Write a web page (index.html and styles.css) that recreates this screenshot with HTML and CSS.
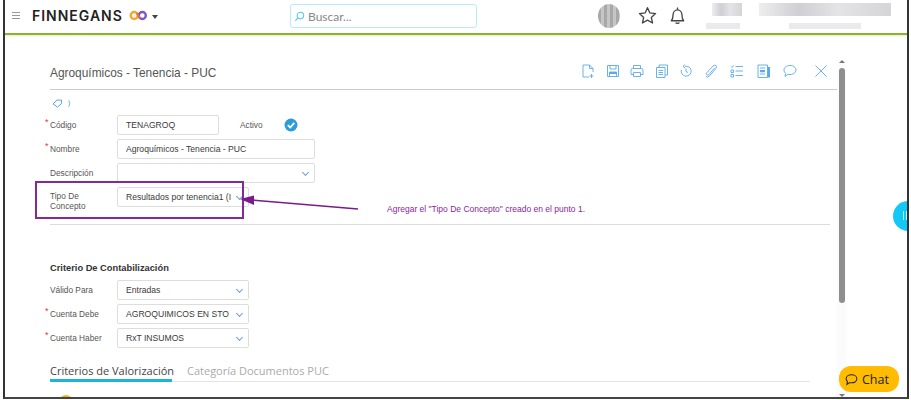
FILE: index.html
```html
<!DOCTYPE html>
<html lang="es">
<head>
<meta charset="utf-8">
<title>Agroquímicos - Tenencia - PUC</title>
<link rel="stylesheet" href="styles.css">
</head>
<body>
<div class="frame">
  <header class="topbar">
    <div class="hamb"><i></i><i></i><i></i></div>
    <div class="logo">FINNEGANS</div>
    <svg class="logo-mark" viewBox="0 0 20 11" width="19" height="11"><circle cx="5.500" cy="5.500" r="3.700" fill="none" stroke="#f7a823" stroke-width="2.500"/><circle cx="14" cy="5.500" r="3.700" fill="none" stroke="#7d55c7" stroke-width="2.500"/><path d="M8.200 2.800q1.600 2.700 3.200 5.400" stroke="#ef6a4c" stroke-width="2" fill="none"/></svg>
    <div class="caret"></div>
    <div class="search">
      <svg viewBox="0 0 12 12" width="11" height="11"><circle cx="7" cy="5" r="3.600" fill="none" stroke="#49c8ee" stroke-width="1.100"/><path d="M4.400 7.600 1.500 10.500" stroke="#49c8ee" stroke-width="1.100"/></svg>
      <span>Buscar...</span>
    </div>
    <div class="top-right">
      <div class="blob"></div>
      <svg class="star" viewBox="0 0 20 20" width="19" height="19"><path d="M10 1.800l2.500 5.500 6 .7-4.500 4 1.300 5.900-5.300-3-5.300 3 1.300-5.900-4.500-4 6-.7z" fill="none" stroke="#444" stroke-width="1.400" stroke-linejoin="round"/></svg>
      <svg class="bell" viewBox="0 0 20 20" width="19" height="19"><path d="M3.500 15.500c1.500-1.500 1.800-3 1.800-6 0-3 2-5.500 4.700-5.500s4.700 2.500 4.700 5.500c0 3 .3 4.500 1.800 6z" fill="none" stroke="#444" stroke-width="1.400" stroke-linejoin="round"/><path d="M10 1.500v2.500M8 17.500c.7 1 3.300 1 4 0" fill="none" stroke="#444" stroke-width="1.400"/></svg>
      <div class="blur-a"><b></b><u></u></div>
      <div class="blur-b"><b></b><u></u></div>
    </div>
  </header>

  <div class="page">
    <main class="content">
      <div class="title-row">
        <h1>Agroquímicos - Tenencia - PUC</h1>
        <div class="tools">
          <svg viewBox="0 0 14 14"><path d="M8.500 1H2v12h6M8.500 1 12 4.500V8M8.500 1v3.500H12M10.500 10v4M8.500 12h4"/></svg>
          <svg viewBox="0 0 14 14"><path d="M1.500 1.500h11v11h-11zM4 1.500v3.500h6V1.500M3.500 12.500V8h7v4.500"/><path class="fill" d="M3.500 8h7v2h-7z"/></svg>
          <svg viewBox="0 0 14 14"><path d="M3.500 4.500V1.500h7v3M3.500 10.500H1V6q0-1.500 1.500-1.500h9Q13 4.500 13 6v4.500h-2.500M3.500 8.500h7v4h-7z"/></svg>
          <svg viewBox="0 0 14 14"><path d="M1.500 3.500h8.500v10H1.500zM4 3.500V1h8.500v10H10M3.500 6.500h4.500M3.500 8.500h4.500M3.500 10.500h4.500"/></svg>
          <svg viewBox="0 0 14 14"><path d="M6 2.300A5 5 0 1 1 2.300 6M6 .5 4 2.300 6 4M7 4.500v3l2 1"/></svg>
          <svg viewBox="0 0 14 14"><path d="M10.500 4 5 10.500q-1.300 1.300-2.300.3t.3-2.300L9 2q1.700-1.500 3-.3t-.3 3L5.500 12q-2 2-3.600.5"/></svg>
          <svg class="wide" viewBox="0 0 14 14"><path d="M5.500 2.500H13M5.500 7H13M5.500 11.500H13M1 6h2.500v2.500H1zM1 10.500h2.500V13H1zM1 2.500l1 1 1.500-2"/></svg>
          <svg class="wide" viewBox="0 0 14 14"><path d="M1 1h9.500v12.500H1zM3 4h5M3 10h5"/><path class="fill" d="M3 6h5v2.200H3zM10.500 3H13v10.500h-2.500z"/></svg>
          <svg class="wide" viewBox="0 0 14 14"><path d="M7 1.500c3.300 0 6 1.900 6 4.500s-2.700 4.500-6 4.500q-1 0-2-.2L2 12.500l.6-3C1.600 8.600 1 7.400 1 6c0-2.600 2.700-4.500 6-4.500z"/></svg>
          <svg class="close" viewBox="0 0 14 14"><path d="M1.500 1.500l11 11M12.500 1.500l-11 11"/></svg>
        </div>
      </div>
      <div class="crumb">
        <svg viewBox="0 0 12 10" width="11" height="9"><path d="M1 5.500 5.500 1.200H10.500V5L6 9z" fill="none" stroke="#3f9cf0" stroke-width="1"/></svg>
        <svg viewBox="0 0 5 10" width="4" height="9"><path d="M1 1q2.500 4 0 8" fill="none" stroke="#3f9cf0" stroke-width=".9"/></svg>
      </div>

      <section class="form-top">
        <div class="row">
          <label class="req">Código</label>
          <div class="field w-code">TENAGROQ</div>
          <span class="active-label">Activo</span>
          <svg class="check" viewBox="0 0 14 14" width="14" height="14"><circle cx="7" cy="7" r="6.500" fill="#2d9cdb"/><path d="M3.800 7.200 6.200 9.500 10.300 4.800" fill="none" stroke="#fff" stroke-width="1.800"/></svg>
        </div>
        <div class="row">
          <label class="req">Nombre</label>
          <div class="field w-long">Agroquímicos - Tenencia - PUC</div>
        </div>
        <div class="row">
          <label>Descripción</label>
          <div class="field w-long select"></div>
        </div>
        <div class="row tipo">
          <label>Tipo De<br>Concepto</label>
          <div class="field w-mid select">Resultados por tenencia1 (I</div>
        </div>
      </section>

      <hr class="rule">

      <h2>Criterio De Contabilización</h2>
      <section>
        <div class="row">
          <label>Válido Para</label>
          <div class="field w-mid select">Entradas</div>
        </div>
        <div class="row">
          <label class="req">Cuenta Debe</label>
          <div class="field w-mid select"><span class="clip">AGROQUIMICOS EN STO</span></div>
        </div>
        <div class="row">
          <label class="req">Cuenta Haber</label>
          <div class="field w-mid select">RxT INSUMOS</div>
        </div>
      </section>

      <nav class="tabs">
        <span class="tab on">Criterios de Valorización</span>
        <span class="tab">Categoría Documentos PUC</span>
      </nav>
      <div class="warn-dot"></div>
    </main>

    <aside class="scroll">
      <div class="arrow up"></div>
      <div class="thumb"></div>
      <div class="arrow down"></div>
    </aside>
  </div>

  <div class="note-box"></div>
  <svg class="note-arrow" viewBox="0 0 120 22" width="120" height="22"><path d="M118 18 12 9" stroke="#7b1a8c" stroke-width="1.500"/><path d="M0 8 14 4.500 14 14z" fill="#7b1a8c"/></svg>
  <div class="note-text">Agregar el "Tipo De Concepto" creado en el punto 1.</div>

  <div class="handle"><i></i><i></i></div>
  <button class="chat">
    <svg viewBox="0 0 14 14" width="13" height="13"><path d="M7 2c3.200 0 5.800 1.800 5.800 4.300S10.200 10.600 7 10.600q-1 0-1.900-.2L2 12.300l.7-3C1.700 8.500 1.200 7.500 1.200 6.300 1.200 3.800 3.800 2 7 2z" fill="none" stroke="#222" stroke-width="1.100"/></svg>
    Chat
  </button>
</div>
</body>
</html>
```

FILE: styles.css
```css
* { box-sizing: border-box; }
html, body { margin: 0; height: 400px; overflow: hidden; background: #fff; }
body { padding: 0 2px 1px 3px; font-family: "Liberation Sans", Arial, sans-serif; color: #444; }

.frame {
  position: relative;
  height: 399px;
  border-left: 2px solid #333;
  border-right: 2px solid #333;
  border-bottom: 2px solid #444;
  overflow: hidden;
  background: #fff;
}

/* top bar */
.topbar {
  display: flex;
  align-items: center;
  height: 35px;
  padding-bottom: 2px;
  border-bottom: 2px solid #8db32c;
  box-shadow: 0 1px 2px rgba(141, 179, 44, .25);
}
.hamb { display: flex; flex-direction: column; gap: 2px; width: 8px; margin-left: 7px; }
.hamb i { display: block; height: 1px; background: #999; }
.logo { margin-left: 12px; font: 600 14px "Inter", sans-serif; color: #222; letter-spacing: 1px; width: 92px; white-space: nowrap; }
.logo-mark { margin-left: 5px; }
.caret { margin-left: 4px; margin-top: 2px; border: 3.500px solid transparent; border-top: 4px solid #444; border-bottom: 0; }
.search {
  display: flex; align-items: center; gap: 3px;
  width: 187px; height: 24px;
  margin-left: 132px; margin-top: 1px;
  padding-left: 3px;
  border: 1px solid #b5ecfb; border-radius: 3px;
  font: 12px "Lato", sans-serif; color: #888;
}
.top-right { display: flex; align-items: center; margin-left: 120px; }
.blob {
  width: 22px; height: 24px; border-radius: 50%;
  margin-left: 1px;
  background: repeating-linear-gradient(90deg, #a8a8a8 0 3px, #c6c6c6 3px 6px);
}
.star { margin-left: 18px; }
.bell { margin-left: 11px; }
.blur-a, .blur-b { display: flex; flex-direction: column; align-items: center; }
.blur-a { margin-left: 14px; width: 44px; }
.blur-b { margin-left: 14px; width: 132px; }
.blur-a b, .blur-b b { display: block; height: 13px; background: linear-gradient(90deg, #eee, #cfcfd4 30%, #e4e4e6 60%, #d5d5d8); }
.blur-a b { width: 30px; margin-left: 8px; }
.blur-b b { width: 132px; }
.blur-a u, .blur-b u { display: block; height: 6px; margin-top: 7px; background: #eaeaec; }
.blur-a u { width: 34px; }
.blur-b u { width: 72px; }

/* page */
.page { display: flex; height: 362px; }
.content { width: 832px; padding: 30px 0 0 45px; position: relative; flex: none; }

.title-row {
  display: flex; align-items: center; justify-content: space-between;
  height: 22px; width: 787px;
  border-bottom: 1px solid #ccc;
  box-sizing: content-box; padding-bottom: 2px;
}
h1 { margin: 0; font: 11.900px "Liberation Sans", sans-serif; color: #555; position: relative; top: -3px; }
.tools { display: flex; align-items: center; gap: 10.500px; margin-right: 9px; position: relative; top: -5px; }
.tools svg { width: 14px; height: 14px; fill: none; stroke: #5aa9ef; stroke-width: .9; }
.tools .fill { fill: #5aa9ef; stroke: none; }
.tools .wide { margin-left: 2px; }
.tools .close { margin-left: 6.500px; }

.crumb { display: flex; align-items: center; gap: 5px; height: 12px; margin: 7px 0 6px 2px; }

.row { display: flex; align-items: center; height: 20px; margin-bottom: 4px; }
.row label { width: 67px; flex: none; font-size: 8.300px; line-height: 10px; color: #555; position: relative; }
.req::before { content: "*"; position: absolute; left: -5px; top: -3px; color: #e33; font-size: 9px; }
.field {
  position: relative; height: 20px; padding: 0 8px;
  border: 1px solid #ddd; border-radius: 2px;
  font-size: 8.600px; line-height: 18px; color: #3a3a3a; white-space: nowrap;
  background: #fff;
}
.clip { display: block; width: 106px; }
.select::after {
  content: ""; position: absolute; right: 6px; top: 6px;
  width: 4px; height: 4px;
  border-right: 1px solid #6f9fd8; border-bottom: 1px solid #6f9fd8;
  transform: rotate(45deg);
}
.w-code { width: 102px; }
.w-long { width: 198px; }
.w-mid { width: 132px; }
.active-label { margin-left: 21px; font-size: 8.300px; color: #555; }
.check { margin-left: 21px; }
.tipo { margin-bottom: 0; height: 20px; }
.tipo label { position: relative; top: 3.500px; }

.rule { margin: 17px 0 0; border: 0; border-top: 1px solid #ddd; width: 780px; }

h2 { margin: 38px 0 0; font: bold 9.300px/11px "Liberation Sans", sans-serif; color: #333; height: 17px; }

.tabs {
  display: flex; gap: 15px;
  width: 760px; height: 21px; margin-top: 13px;
  border-bottom: 1px solid #e4e4e4;
  font: 11px/20px "Open Sans", sans-serif;
}
.tab { color: #aaa; height: 21px; }
.tab.on { color: #444; border-bottom: 3px solid #1db4d8; width: 122px; white-space: nowrap; }

.warn-dot { width: 14px; height: 14px; margin: 13px 0 0 9px; border-radius: 50%; background: #f5b21a; }

/* scrollbar */
.scroll { position: relative; flex: none; width: 9px; background: #fbfbfb; margin-top: 25px; height: 337px; }
.thumb { position: absolute; left: 2px; top: 8px; width: 6px; height: 235px; border-radius: 3px; background: #8e8e8e; }
.arrow { position: absolute; left: 2px; border: 3px solid transparent; }
.arrow.up { top: 0; border-bottom: 3px solid #777; border-top: 0; }
.arrow.down { bottom: 0; border-top: 3px solid #777; border-bottom: 0; }

/* annotation */
.note-box { position: absolute; left: 30px; top: 181px; width: 209px; height: 38px; border: 2px solid #86289a; }
.note-arrow { position: absolute; left: 235px; top: 191px; }
.note-text { position: absolute; left: 382px; top: 204px; font-size: 8.500px; color: #8a1f9b; white-space: nowrap; }

/* floating */
.handle {
  position: absolute; left: 888px; top: 201px;
  width: 30px; height: 30px; border-radius: 50%;
  background: #14c8f5;
  display: flex; gap: 1.500px; padding: 10px 0 0 10px;
}
.handle i { width: 1px; height: 9px; background: #bff; }
.chat {
  position: absolute; left: 834px; top: 366px;
  display: flex; align-items: center; gap: 4px;
  width: 60px; height: 26px; padding: 0 0 0 6px;
  border: 0; border-radius: 12px;
  background: #ffbc00; color: #222;
  font: 12.500px "Open Sans", sans-serif;
}
```
